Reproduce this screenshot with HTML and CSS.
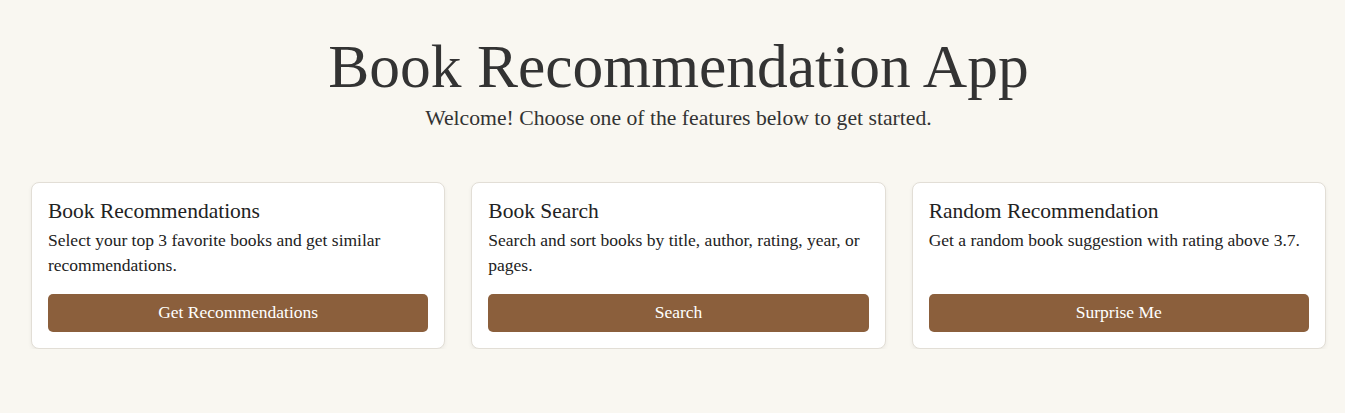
FILE: index.html
```html
<!DOCTYPE html>
<html lang="en">
<head>
<meta charset="utf-8">
<title>Book Recommendation App</title>
<link rel="stylesheet" href="styles.css">
</head>
<body>
<main class="page">
  <header class="hero">
    <h1 class="title">Book Recommendation App</h1>
    <p class="subtitle">Welcome! Choose one of the features below to get started.</p>
  </header>
  <section class="features">
    <div class="card">
      <h2 class="card-title">Book Recommendations</h2>
      <p class="card-text">Select your top 3 favorite books and get similar recommendations.</p>
      <button class="btn">Get Recommendations</button>
    </div>
    <div class="card">
      <h2 class="card-title">Book Search</h2>
      <p class="card-text">Search and sort books by title, author, rating, year, or pages.</p>
      <button class="btn">Search</button>
    </div>
    <div class="card">
      <h2 class="card-title">Random Recommendation</h2>
      <p class="card-text">Get a random book suggestion with rating above 3.7.</p>
      <button class="btn">Surprise Me</button>
    </div>
  </section>
</main>
</body>
</html>
```

FILE: styles.css
```css
* { box-sizing: border-box; }
html, body { margin: 0; padding: 0; }
body {
  background: #f9f7f1;
  color: #333;
  font-family: "Liberation Serif", serif;
}
.page {
  padding: 30px 19px 0 31px;
}
.hero {
  text-align: center;
}
.title {
  margin: 0;
  font-family: "Liberation Serif", serif;
  font-weight: normal;
  font-size: 61.5px;
  line-height: 72px;
  color: #333;
}
.subtitle {
  margin: 2px 0 0;
  font-family: "Liberation Serif", serif;
  font-size: 21.7px;
  line-height: 28px;
  color: #333;
}
.features {
  margin-top: 50px;
  display: grid;
  grid-template-columns: repeat(3, 1fr);
  gap: 26px;
}
.card {
  background: #fff;
  border: 1px solid #e2ded6;
  border-radius: 8px;
  box-shadow: 0 2px 4px rgba(0,0,0,0.06);
  padding: 16px 16px 16px;
  height: 167px;
  display: flex;
  flex-direction: column;
}
.card-title {
  margin: 0;
  font-family: "Liberation Serif", serif;
  font-weight: normal;
  font-size: 21.5px;
  line-height: 24px;
  color: #222;
}
.card-text {
  margin: 5px 0 0;
  font-family: "Liberation Serif", serif;
  font-size: 17.5px;
  line-height: 25px;
  color: #222;
}
.btn {
  margin-top: auto;
  height: 38px;
  padding: 0 0 2px;
  border: none;
  border-radius: 5px;
  background: #8b5f3c;
  color: #fff;
  font-family: "Liberation Serif", serif;
  font-size: 17.5px;
  cursor: pointer;
}
```
